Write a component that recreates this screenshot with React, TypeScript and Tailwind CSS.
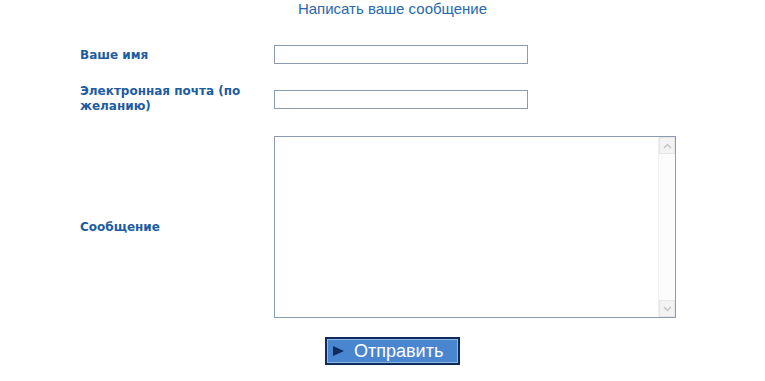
export default function App() {
  return (
    <div className="w-[765px] h-[381px] bg-white font-['Liberation_Sans',Arial,sans-serif]">
      <div className="ml-[80px] w-[625px]">
        <div className="h-[18px] leading-[18px] text-center text-[15px] text-[#2a67ad]">
          Написать ваше сообщение
        </div>

        <div className="mt-[27px] flex items-center h-[19px]">
          <label className="w-[194px] font-['DejaVu_Sans',Verdana,sans-serif] text-[12px] font-bold text-[#1c5c9f]">
            Ваше имя
          </label>
          <input type="text" className="w-[254px] h-[19px] border border-[#8c9cae] outline-none" />
        </div>

        <div className="mt-[20px] flex items-center h-[30px]">
          <label className="w-[194px] pr-[20px] font-['DejaVu_Sans',Verdana,sans-serif] text-[12px] leading-[15px] font-bold text-[#1c5c9f]">
            Электронная почта (по желанию)
          </label>
          <input type="text" className="w-[254px] h-[19px] border border-[#8c9cae] outline-none" />
        </div>

        <div className="mt-[22px] flex items-center">
          <label className="w-[194px] font-['DejaVu_Sans',Verdana,sans-serif] text-[12px] font-bold text-[#1c5c9f]">
            Сообщение
          </label>
          <div className="flex w-[402px] h-[182px] border border-[#8c9cae]">
            <textarea className="flex-1 resize-none outline-none" />
            <div className="w-[17px] flex flex-col justify-between bg-[#fcfcfc] border-l border-[#f0f0f0]">
              <div className="h-[17px] flex items-center justify-center bg-[#f3f3f3] border border-[#e6e6e6]">
                <svg width="9" height="6" viewBox="0 0 9 6">
                  <path d="M1 5 L4.5 1.5 L8 5" fill="none" stroke="#c4c4c4" strokeWidth="1.5" />
                </svg>
              </div>
              <div className="h-[17px] flex items-center justify-center bg-[#f3f3f3] border border-[#e6e6e6]">
                <svg width="9" height="6" viewBox="0 0 9 6">
                  <path d="M1 1 L4.5 4.5 L8 1" fill="none" stroke="#c4c4c4" strokeWidth="1.5" />
                </svg>
              </div>
            </div>
          </div>
        </div>

        <div className="mt-[19px] flex justify-center">
          <button className="w-[135px] h-[28px] border-2 border-[#0d2c5c] bg-[#0d2c5c]">
            <div className="h-full flex items-center border border-[#8fb8ea] bg-[#4a86cf] pl-[5px]">
              <svg width="11" height="10" viewBox="0 0 11 10">
                <path d="M0 0 L11 5 L0 10 Z" fill="#0d2c5c" />
              </svg>
              <span className="ml-[10px] text-[18px] leading-[18px] text-white">Отправить</span>
            </div>
          </button>
        </div>
      </div>
    </div>
  );
}
